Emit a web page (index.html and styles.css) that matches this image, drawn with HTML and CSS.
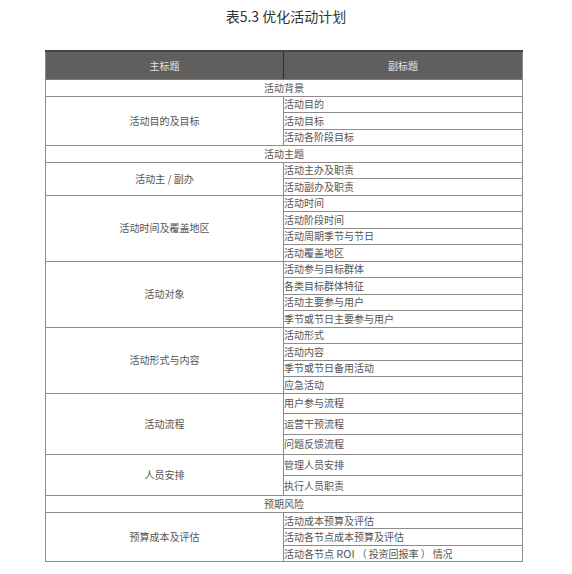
FILE: index.html
```html
<!DOCTYPE html>
<html lang="zh-CN">
<head>
<meta charset="utf-8">
<title>表5.3 优化活动计划</title>
<link rel="stylesheet" href="styles.css">
</head>
<body>
<h1 class="caption">表5.3 优化活动计划</h1>
<table class="plan">
  <colgroup><col class="c-main"><col class="c-sub"></colgroup>
  <thead>
    <tr class="head"><th>主标题</th><th>副标题</th></tr>
  </thead>
  <tbody>
    <tr class="span"><td colspan="2">活动背景</td></tr>
    <tr><td class="main" rowspan="3">活动目的及目标</td><td class="sub">活动目的</td></tr>
    <tr><td class="sub">活动目标</td></tr>
    <tr><td class="sub">活动各阶段目标</td></tr>
    <tr class="span"><td colspan="2">活动主题</td></tr>
    <tr><td class="main" rowspan="2">活动主 / 副办</td><td class="sub">活动主办及职责</td></tr>
    <tr><td class="sub">活动副办及职责</td></tr>
    <tr><td class="main" rowspan="4">活动时间及覆盖地区</td><td class="sub">活动时间</td></tr>
    <tr><td class="sub">活动阶段时间</td></tr>
    <tr><td class="sub">活动周期季节与节日</td></tr>
    <tr><td class="sub">活动覆盖地区</td></tr>
    <tr><td class="main" rowspan="4">活动对象</td><td class="sub">活动参与目标群体</td></tr>
    <tr><td class="sub">各类目标群体特征</td></tr>
    <tr><td class="sub">活动主要参与用户</td></tr>
    <tr><td class="sub">季节或节日主要参与用户</td></tr>
    <tr><td class="main" rowspan="4">活动形式与内容</td><td class="sub">活动形式</td></tr>
    <tr><td class="sub">活动内容</td></tr>
    <tr><td class="sub">季节或节日备用活动</td></tr>
    <tr><td class="sub">应急活动</td></tr>
    <tr class="tall"><td class="main" rowspan="3">活动流程</td><td class="sub">用户参与流程</td></tr>
    <tr class="tall"><td class="sub">运营干预流程</td></tr>
    <tr class="tall"><td class="sub">问题反馈流程</td></tr>
    <tr class="tall"><td class="main" rowspan="2">人员安排</td><td class="sub">管理人员安排</td></tr>
    <tr class="tall"><td class="sub">执行人员职责</td></tr>
    <tr class="span"><td colspan="2">预期风险</td></tr>
    <tr><td class="main" rowspan="3">预算成本及评估</td><td class="sub">活动成本预算及评估</td></tr>
    <tr><td class="sub">活动各节点成本预算及评估</td></tr>
    <tr><td class="sub">活动各节点 <span class="latin">ROI</span><span class="paren">（</span>投资回报率<span class="paren">）</span>情况</td></tr>
  </tbody>
</table>
</body>
</html>
```
FILE: styles.css
```css
html, body {
  margin: 0;
  padding: 0;
  background: #ffffff;
}
body {
  font-family: "Noto Sans CJK SC", "Noto Sans", "Liberation Sans", sans-serif;
  color: #555555;
}
.caption {
  margin: 6px 0 0 0;
  font-size: 14px;
  line-height: 20px;
  font-weight: normal;
  color: #333333;
  text-align: center;
}
.plan {
  margin: 24px 0 0 45px;
  width: 477px;
  border-collapse: collapse;
  table-layout: fixed;
  border: 1px solid #4a4a4a;
  font-size: 10px;
}
.c-main { width: 238px; }
.c-sub { width: 239px; }
.plan th, .plan td {
  padding: 0;
  border: 1px solid #8c8c8c;
  line-height: 14px;
  white-space: nowrap;
}
.head th {
  height: 27px;
  background: #605f5d;
  color: #e2e2e2;
  font-weight: normal;
  text-align: center;
  border-top: 2px solid #444444;
  border-bottom: 1px solid #7a7a7a;
}
.head th:first-child {
  border-right: 1px solid #2e2e2e;
}
.plan tbody tr {
  height: 16.5px;
}
.plan tbody tr.tall {
  height: 20.6px;
}
.span td {
  text-align: center;
}
.main {
  text-align: center;
  border-right: 1px solid #333333;
}
.sub {
  text-align: left;
  padding-left: 3px;
}
.latin {
  font-size: 11px;
}
.paren {
  margin: 0 2px;
}
```
